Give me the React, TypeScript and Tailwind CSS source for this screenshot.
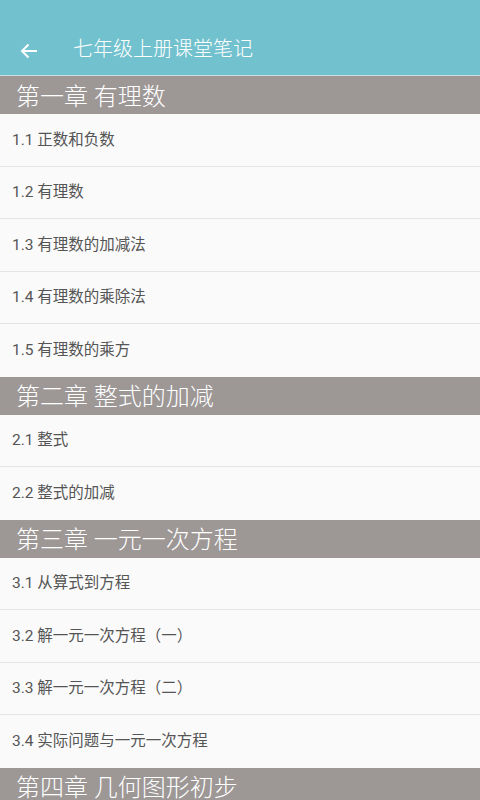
const chapters = [
  {
    title: '第一章 有理数',
    items: ['1.1 正数和负数', '1.2 有理数', '1.3 有理数的加减法', '1.4 有理数的乘除法', '1.5 有理数的乘方'],
  },
  {
    title: '第二章 整式的加减',
    items: ['2.1 整式', '2.2 整式的加减'],
  },
  {
    title: '第三章 一元一次方程',
    items: ['3.1 从算式到方程', '3.2 解一元一次方程（一）', '3.3 解一元一次方程（二）', '3.4 实际问题与一元一次方程'],
  },
  // Only the heading of chapter four fits on screen.
  {
    title: '第四章 几何图形初步',
    items: [],
  },
]

export default function App() {
  return (
    <div
      className="h-[800px] w-[480px] overflow-hidden bg-[#fafafa]"
      style={{ fontFamily: 'Roboto, "Noto Sans CJK SC", sans-serif' }}
    >
      {/* Toolbar */}
      <header className="flex h-[76px] items-end border-b border-[#c9dfe3] bg-[#72c1ce] pb-[14px]">
        <button type="button" className="ml-[19px] flex h-5 w-5 items-center justify-center">
          <svg width="18" height="16" viewBox="0 0 18 16" fill="none" stroke="white" strokeWidth="2">
            <path d="M17 8H2M8.5 1.5L2 8l6.5 6.5" />
          </svg>
        </button>
        <h1 className="ml-[34px] text-[20px] font-light leading-6 text-white">七年级上册课堂笔记</h1>
      </header>

      {chapters.map((ch) => (
        <section key={ch.title}>
          <h2 className="flex h-[38px] items-center bg-[#9d9796] pl-4 pt-[3px] text-[24px] font-light leading-none text-white">
            {ch.title}
          </h2>
          <ul>
            {ch.items.map((item, i) => (
              <li
                key={item}
                className={`flex h-[52.5px] items-center pl-3 pt-px text-[15.5px] text-[#555555] ${
                  i < ch.items.length - 1 ? 'border-b border-[#e4e4e4]' : ''
                }`}
              >
                {item}
              </li>
            ))}
          </ul>
        </section>
      ))}
    </div>
  )
}
